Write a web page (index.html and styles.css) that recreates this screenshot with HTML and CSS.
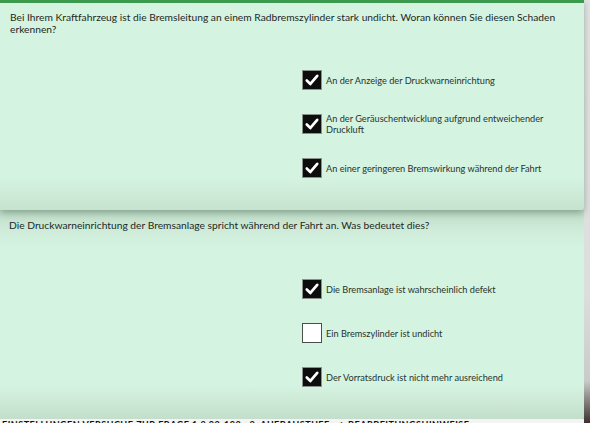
FILE: index.html
```html
<!DOCTYPE html>
<html lang="de">
<head>
<meta charset="utf-8">
<title>Fragen</title>
<link rel="stylesheet" href="styles.css">
</head>
<body>
<div class="screen">
  <div class="main">
    <section class="card card-first">
      <p class="question">Bei Ihrem Kraftfahrzeug ist die Bremsleitung an einem Radbremszylinder stark undicht. Woran können Sie diesen Schaden erkennen?</p>
      <ul class="answers answers-first">
        <li class="answer"><span class="box checked"><svg viewBox="0 0 20 20"><path d="M4.2 10.6 L8.2 14.4 L15.8 5.4"/></svg></span><span class="label">An der Anzeige der Druckwarneinrichtung</span></li>
        <li class="answer"><span class="box checked"><svg viewBox="0 0 20 20"><path d="M4.2 10.6 L8.2 14.4 L15.8 5.4"/></svg></span><span class="label">An der Geräuschentwicklung aufgrund entweichender Druckluft</span></li>
        <li class="answer"><span class="box checked"><svg viewBox="0 0 20 20"><path d="M4.2 10.6 L8.2 14.4 L15.8 5.4"/></svg></span><span class="label">An einer geringeren Bremswirkung während der Fahrt</span></li>
      </ul>
    </section>
    <section class="card card-second">
      <p class="question">Die Druckwarneinrichtung der Bremsanlage spricht während der Fahrt an. Was bedeutet dies?</p>
      <ul class="answers answers-second">
        <li class="answer"><span class="box checked"><svg viewBox="0 0 20 20"><path d="M4.2 10.6 L8.2 14.4 L15.8 5.4"/></svg></span><span class="label">Die Bremsanlage ist wahrscheinlich defekt</span></li>
        <li class="answer"><span class="box"></span><span class="label">Ein Bremszylinder ist undicht</span></li>
        <li class="answer"><span class="box checked"><svg viewBox="0 0 20 20"><path d="M4.2 10.6 L8.2 14.4 L15.8 5.4"/></svg></span><span class="label">Der Vorratsdruck ist nicht mehr ausreichend</span></li>
      </ul>
    </section>
    <div class="footer-strip">EINSTELLUNGEN VERSUCHE ZUR FRAGE 1.2.03-103 · 2. AUFBAUSTUFE · ◆ BEARBEITUNGSHINWEISE</div>
  </div>
  <aside class="side"></aside>
</div>
</body>
</html>
```
FILE: styles.css
```css
html, body {
  margin: 0;
  padding: 0;
}
body {
  width: 590px;
  height: 423px;
  overflow: hidden;
  background: #e4e6e5;
  font-family: "Lato", "Open Sans", sans-serif;
  color: #1f2a25;
}
.screen {
  display: flex;
  width: 590px;
  height: 423px;
}
.main {
  width: 584px;
  display: flex;
  flex-direction: column;
}
.side {
  flex: 1;
  background: linear-gradient(to bottom, #e2e4e3 0, #dcdedd 70%, #c9cbca 90%, #3a3230 100%);
}
.card {
  box-sizing: border-box;
  margin: 0;
  display: flex;
  flex-direction: column;
}
.card-first {
  height: 210px;
  border-top: 3px solid #3c9a4e;
  background: linear-gradient(to bottom, #d5f3e1 0, #d5f3e1 84%, #c6e3cf 100%);
  border-radius: 0 0 4px 0;
  box-shadow: 0 3px 7px rgba(30, 60, 40, 0.35);
  position: relative;
  z-index: 1;
}
.card-second {
  height: 209px;
  background: linear-gradient(to bottom, #bfdcc8 0, #cfecda 10%, #d5f3e1 18%, #d5f3e1 84%, #c3dfcb 100%);
  border-radius: 0 0 4px 0;
  box-shadow: 1px 1px 3px rgba(30, 60, 40, 0.3);
}
.question {
  margin: 0;
  padding: 8px 12px 0 10px;
  font-size: 10.25px;
  line-height: 12px;
  color: #1d2823;
}
.card-second .question {
  padding-top: 9px;
  padding-left: 9px;
}
.answers {
  list-style: none;
  margin: 0;
  padding: 0 0 0 302px;
}
.answers-first {
  margin-top: 23px;
}
.answers-second {
  margin-top: 36px;
}
.answer {
  height: 44px;
  display: flex;
  align-items: center;
  gap: 4px;
}
.box {
  box-sizing: border-box;
  width: 20px;
  height: 20px;
  flex: none;
  background: #ffffff;
  border: 1.5px solid #4a4f4c;
  display: flex;
}
.box.checked {
  background: #0d0d0d;
  border: 1px solid #8a908c;
}
.box svg {
  width: 100%;
  height: 100%;
}
.box path {
  fill: none;
  stroke: #ffffff;
  stroke-width: 3;
  stroke-linecap: round;
  stroke-linejoin: round;
}
.label {
  font-size: 9.2px;
  line-height: 11px;
  color: #27342d;
  max-width: 222px;
}
.footer-strip {
  flex: 1;
  background: #f4f4f4;
  font-size: 9px;
  font-weight: 700;
  line-height: 9px;
  padding-top: 1px;
  padding-left: 2px;
  white-space: nowrap;
  overflow: hidden;
  color: #111;
  letter-spacing: 0.5px;
}
```
